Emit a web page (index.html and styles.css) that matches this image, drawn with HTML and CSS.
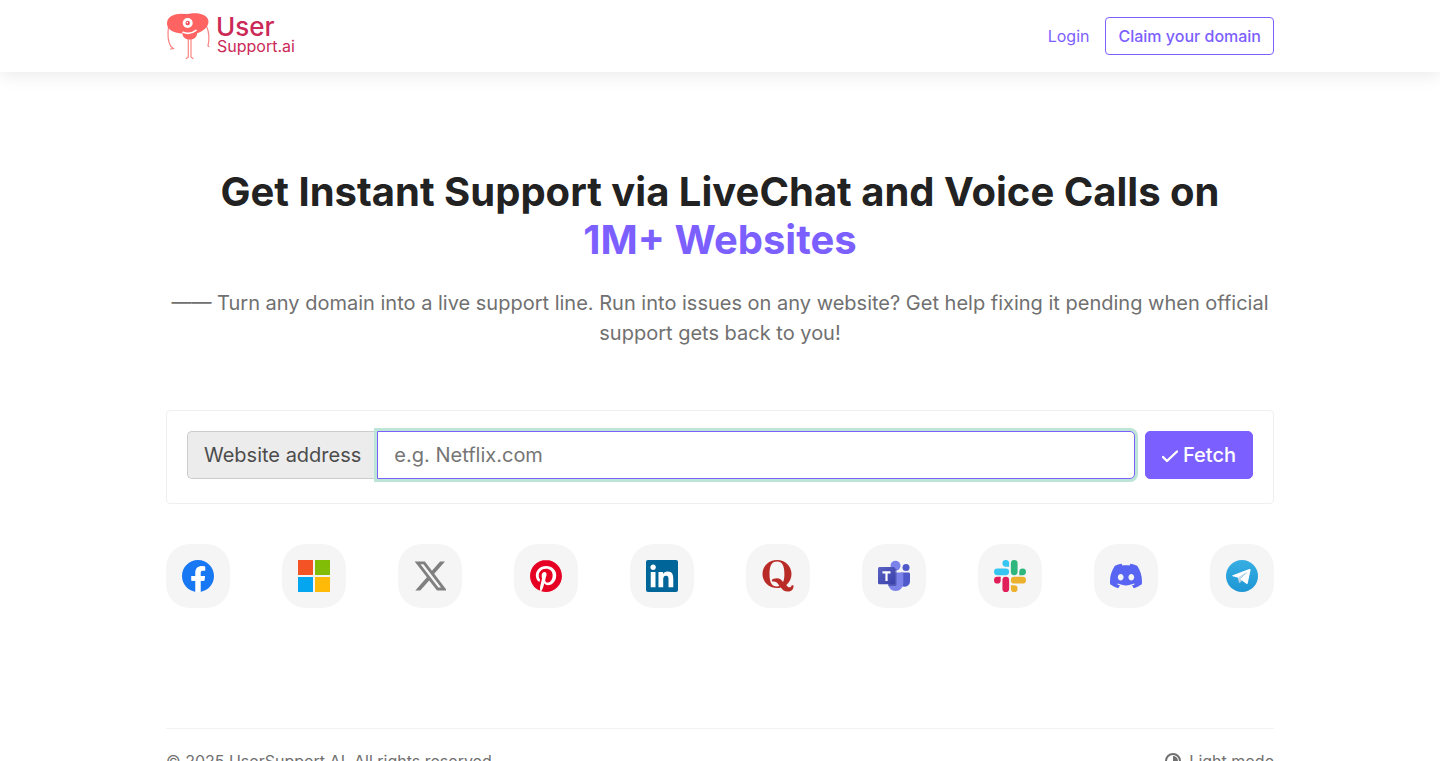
FILE: index.html
```html
<!DOCTYPE html>
<html lang="en">
<head>
<meta charset="utf-8">
<meta name="viewport" content="width=device-width, initial-scale=1">
<title>UserSupport.ai</title>
<link rel="stylesheet" href="styles.css">
</head>
<body>
<header class="site-header">
  <div class="container header-row">
    <a class="brand" href="#" aria-label="User Support.ai">
      <svg class="brand-logo" viewBox="0 0 136 50" aria-hidden="true">
        <g fill="none" stroke="#fa8584" stroke-width="1.200" stroke-linecap="round">
          <path d="M2.500 16C1.500 23 2 30 4.500 35l3 2.500-3 .5"/>
          <path d="M40.500 15c2.500 6 3 13 1.500 20l1 .5"/>
          <path d="M22.300 28v18l-2 1.500"/>
          <path d="M25 28v18l2 1.500"/>
        </g>
        <path fill="#ff6362" d="M21.500 3.500C26 1.500 41 1 42.500 10c0 7-6 10-11.500 12.500 0 8-14.500 8-14.500 0C9 22 1 19.500 1 12.500 1 3 14 1.500 21.500 3.500z"/>
        <path d="M17 4.500c3-1.500 5-1.500 8-.5" fill="none" stroke="#e8505a" stroke-width=".8"/>
        <circle cx="21.700" cy="12" r="5" fill="#fff"/>
        <circle cx="21.700" cy="12" r="2.200" fill="#f0475a"/>
        <circle cx="21.300" cy="11.600" r=".8" fill="#fff"/>
        <path d="M17 21.300c4 1.700 9 1.200 13-2" fill="none" stroke="#fff" stroke-width="1.600" stroke-linecap="round"/>
        <text class="brand-name" x="50" y="25">User</text>
        <text class="brand-sub" x="51" y="41">Support.ai</text>
      </svg>
    </a>
    <nav class="header-nav">
      <a class="login-link" href="#">Login</a>
      <button class="button-outline" type="button">Claim your domain</button>
    </nav>
  </div>
</header>

<main class="container hero">
  <h1 class="hero-title">Get Instant Support via LiveChat and Voice Calls on <span class="accent">1M+ Websites</span></h1>
  <p class="hero-text">—— Turn any domain into a live support line. Run into issues on any website? Get help fixing it pending when official support gets back to you!</p>

  <form class="search-card">
    <div class="input-group">
      <label class="input-label" for="address">Website address</label>
      <input class="input-field" id="address" type="text" placeholder="e.g. Netflix.com">
    </div>
    <button class="button-solid" type="button">
      <svg class="check-icon" viewBox="0 0 16 20" aria-hidden="true"><path d="M1 12l4 4 10-9.500" fill="none" stroke="#fff" stroke-width="2.400" stroke-linecap="round" stroke-linejoin="round"/></svg>
      <span>Fetch</span>
    </button>
  </form>

  <div class="tiles">
    <a class="tile" href="#" aria-label="Facebook"><svg class="tile-icon" viewBox="0 0 24 24"><path fill="#1877f2" d="M24 12.073c0-6.627-5.373-12-12-12s-12 5.373-12 12c0 5.990 4.388 10.954 10.125 11.854v-8.385H7.078v-3.470h3.047V9.430c0-3.007 1.792-4.669 4.533-4.669 1.312 0 2.686.235 2.686.235v2.953H15.830c-1.491 0-1.956.925-1.956 1.874v2.250h3.328l-.532 3.470h-2.796v8.385C19.612 23.027 24 18.062 24 12.073z"/><path fill="#fff" d="M10.125 23.927v-8.385H7.078v-3.470h3.047V9.430c0-3.007 1.792-4.669 4.533-4.669 1.312 0 2.686.235 2.686.235v2.953H15.830c-1.491 0-1.956.925-1.956 1.874v2.250h3.328l-.532 3.470h-2.796v8.385z"/></svg></a>
    <a class="tile" href="#" aria-label="Microsoft"><svg class="tile-icon" viewBox="0 0 32 32"><path fill="#f3f3f3" d="M0 0h32v32H0z"/><path fill="#f35325" d="M0 0h15v15H0z"/><path fill="#81bc06" d="M17 0h15v15H17z"/><path fill="#05a6f0" d="M0 17h15v15H0z"/><path fill="#ffba08" d="M17 17h15v15H17z"/></svg></a>
    <a class="tile" href="#" aria-label="X"><svg class="tile-icon" viewBox="0.8 1.3 21.4 21.4"><path fill="#808080" d="M18.244 2.250h3.308l-7.227 8.260 8.502 11.240H16.170l-5.214-6.817L4.990 21.750H1.680l7.730-8.835L1.254 2.250H8.080l4.713 6.231zm-1.161 17.520h1.833L7.084 4.126H5.117z"/></svg></a>
    <a class="tile" href="#" aria-label="Pinterest"><svg class="tile-icon" viewBox="0 0 24 24"><circle cx="12" cy="12" r="11.500" fill="#fff"/><path fill="#e60023" d="M12.017 0C5.396 0 .029 5.367.029 11.987c0 5.079 3.158 9.417 7.618 11.162-.105-.949-.199-2.403.041-3.439.219-.937 1.406-5.957 1.406-5.957s-.359-.720-.359-1.781c0-1.663.967-2.911 2.168-2.911 1.024 0 1.518.769 1.518 1.688 0 1.029-.653 2.567-.992 3.992-.285 1.193.600 2.165 1.775 2.165 2.128 0 3.768-2.245 3.768-5.487 0-2.861-2.063-4.869-5.008-4.869-3.410 0-5.409 2.562-5.409 5.199 0 1.033.394 2.143.889 2.741.099.120.112.225.085.345-.090.375-.293 1.199-.334 1.363-.053.225-.172.271-.401.165-1.495-.690-2.433-2.878-2.433-4.646 0-3.776 2.748-7.252 7.920-7.252 4.158 0 7.392 2.967 7.392 6.923 0 4.135-2.607 7.462-6.233 7.462-1.214 0-2.354-.629-2.758-1.379l-.749 2.848c-.269 1.045-1.004 2.352-1.498 3.146 1.123.345 2.306.535 3.550.535 6.607 0 11.985-5.365 11.985-11.987C23.970 5.390 18.592.026 11.985.026z"/></svg></a>
    <a class="tile" href="#" aria-label="LinkedIn"><svg class="tile-icon" viewBox="0 0 24 24"><rect width="24" height="24" rx="1.500" fill="#006699"/><path fill="#fff" d="M20.447 20.452h-3.554v-5.569c0-1.328-.027-3.037-1.852-3.037-1.853 0-2.136 1.445-2.136 2.939v5.667H9.351V9h3.414v1.561h.046c.477-.900 1.637-1.850 3.370-1.850 3.601 0 4.267 2.370 4.267 5.455v6.286zM5.337 7.433c-1.144 0-2.063-.926-2.063-2.065 0-1.138.920-2.063 2.063-2.063 1.140 0 2.064.925 2.064 2.063 0 1.139-.925 2.065-2.064 2.065zm1.782 13.019H3.555V9h3.564v11.452z"/></svg></a>
    <a class="tile" href="#" aria-label="Quora"><svg class="tile-icon" viewBox="0 0 32 32"><path fill="#b92b27" fill-rule="evenodd" d="M15 0C23 0 29.500 6 29.500 14c0 4.500-2 8.300-5.200 10.900 1 1.500 2 2.400 3.200 2.400 1.400 0 2-1 2.100-2.100h1.900c.3 3.300-1.500 6.300-5.500 6.300-3.700 0-5.700-1.800-7.200-4.100-1.200.4-2.500.6-3.800.6C7 28 .500 22 .500 14S7 0 15 0zm0 1.500c-5.500 0-7.500 4.500-7.500 12.500s2 12.500 7.500 12.500c.9 0 1.700-.1 2.400-.4-1.200-2.300-2.600-4.600-5.300-4.600-.5 0-1 .1-1.500.3l-.9-1.800c1.100-1 2.700-1.700 4.900-1.700 3.300 0 5 1.600 6.400 3.700 1-1.900 1.400-4.500 1.400-8 0-8-2-12.500-7.400-12.500z"/></svg></a>
    <a class="tile" href="#" aria-label="Microsoft Teams"><svg class="tile-icon" viewBox="0 0 32 32">
      <defs><linearGradient id="teams" x1="0" y1="0" x2="1" y2="1"><stop stop-color="#5a62c3"/><stop offset="1" stop-color="#3940ab"/></linearGradient></defs>
      <circle cx="28" cy="7.500" r="3.500" fill="#5059c9"/><path fill="#5059c9" d="M23 12.500h7.500c.8 0 1.500.7 1.500 1.500v7c0 3.300-2.300 5.700-5.200 5.700-1.500 0-2.800-.4-3.800-1.200z"/>
      <circle cx="17.500" cy="5.800" r="5" fill="#7b83eb"/><path fill="#7b83eb" d="M10 12.500h14c.7 0 1.300.6 1.300 1.300V23c0 4.500-3.500 8-7.700 8S10 27.500 10 23z"/>
      <path fill="#41489f" opacity=".7" d="M13 8.500h4c.8 0 1.500.7 1.500 1.500v14.500c0 .8-.7 1.500-1.500 1.500h-6.600z"/>
      <rect y="7" width="17" height="17.300" rx="1.500" fill="url(#teams)"/><path fill="#fff" d="M4.500 11.300h8v2.100H9.600V21H7.400v-7.600H4.500z"/></svg></a>
    <a class="tile" href="#" aria-label="Slack"><svg class="tile-icon" viewBox="0 0 24 24"><path fill="#e01e5a" d="M5.042 15.165a2.528 2.528 0 0 1-2.520 2.523A2.528 2.528 0 0 1 0 15.165a2.527 2.527 0 0 1 2.522-2.520h2.520v2.520zM6.313 15.165a2.527 2.527 0 0 1 2.521-2.520 2.527 2.527 0 0 1 2.521 2.520v6.313A2.528 2.528 0 0 1 8.834 24a2.528 2.528 0 0 1-2.521-2.522v-6.313z"/><path fill="#36c5f0" d="M8.834 5.042a2.528 2.528 0 0 1-2.521-2.520A2.528 2.528 0 0 1 8.834 0a2.528 2.528 0 0 1 2.521 2.522v2.520H8.834zM8.834 6.313a2.528 2.528 0 0 1 2.521 2.521 2.528 2.528 0 0 1-2.521 2.521H2.522A2.528 2.528 0 0 1 0 8.834a2.528 2.528 0 0 1 2.522-2.521h6.312z"/><path fill="#2eb67d" d="M18.956 8.834a2.528 2.528 0 0 1 2.522-2.521A2.528 2.528 0 0 1 24 8.834a2.528 2.528 0 0 1-2.522 2.521h-2.522V8.834zM17.688 8.834a2.528 2.528 0 0 1-2.523 2.521 2.527 2.527 0 0 1-2.520-2.521V2.522A2.527 2.527 0 0 1 15.165 0a2.528 2.528 0 0 1 2.523 2.522v6.312z"/><path fill="#ecb22e" d="M15.165 18.956a2.528 2.528 0 0 1 2.523 2.522A2.528 2.528 0 0 1 15.165 24a2.527 2.527 0 0 1-2.520-2.522v-2.522h2.520zM15.165 17.688a2.527 2.527 0 0 1-2.520-2.523 2.526 2.526 0 0 1 2.520-2.520h6.313A2.527 2.527 0 0 1 24 15.165a2.528 2.528 0 0 1-2.522 2.523h-6.313z"/></svg></a>
    <a class="tile" href="#" aria-label="Discord"><svg class="tile-icon" viewBox="0 0 24 24"><path fill="#5865f2" d="M20.317 4.370a19.791 19.791 0 00-4.885-1.515.074.074 0 00-.079.037c-.211.375-.445.865-.608 1.250-1.845-.276-3.680-.276-5.487 0-.164-.393-.406-.874-.618-1.250a.077.077 0 00-.079-.037 19.736 19.736 0 00-4.885 1.515.070.070 0 00-.032.028C.533 9.046-.319 13.580.099 18.058a.082.082 0 00.031.056c2.053 1.508 4.041 2.423 5.993 3.029a.078.078 0 00.084-.028c.462-.630.873-1.295 1.226-1.994a.076.076 0 00-.042-.106c-.653-.248-1.274-.550-1.872-.892a.077.077 0 01-.008-.128c.126-.094.252-.192.372-.291a.074.074 0 01.078-.011c3.928 1.793 8.180 1.793 12.061 0a.074.074 0 01.079.010c.120.099.246.198.373.292a.077.077 0 01-.007.128 12.299 12.299 0 01-1.873.891.077.077 0 00-.041.107c.360.698.772 1.363 1.225 1.993a.076.076 0 00.084.029c1.961-.607 3.950-1.522 6.002-3.029a.077.077 0 00.031-.055c.500-5.177-.838-9.674-3.549-13.660a.061.061 0 00-.031-.029zM8.020 15.331c-1.183 0-2.157-1.086-2.157-2.419 0-1.333.956-2.419 2.157-2.419 1.211 0 2.176 1.095 2.157 2.419 0 1.333-.956 2.419-2.157 2.419zm7.975 0c-1.183 0-2.157-1.086-2.157-2.419 0-1.333.955-2.419 2.157-2.419 1.211 0 2.176 1.095 2.157 2.419 0 1.333-.946 2.419-2.157 2.419z"/></svg></a>
    <a class="tile" href="#" aria-label="Telegram"><svg class="tile-icon" viewBox="0 0 32 32">
      <defs><linearGradient id="telegram" x1="0" y1="0" x2="0" y2="1"><stop stop-color="#37aee2"/><stop offset="1" stop-color="#1e96d4"/></linearGradient></defs>
      <circle cx="16" cy="16" r="16" fill="url(#telegram)"/><path fill="#c8daea" d="M11.500 16.500l1.700 6.500c.4 0 .6-.2.900-.5l3-2.800z"/><path fill="#a9c9dd" d="M13.200 23l.8-4.800 2.800 2z"/><path fill="#fff" d="M6.700 15.300L23.300 9c.8-.3 1.400.2 1.200 1.200l-2.700 12.900c-.2.900-.8 1.100-1.500.7L14 19.100l7.500-7.200-9.300 5.900-5.500-1.600c-.6-.2-.6-.6 0-.9z"/><path fill="#c8daea" d="M14 18.900l7.800-7.300-9.600 6z"/></svg></a>
  </div>
</main>

<footer class="container">
  <div class="footer-row">
    <span>© 2025 UserSupport AI. All rights reserved.</span>
    <button class="mode-button" type="button">
      <svg class="mode-icon" viewBox="0 0 16 16" aria-hidden="true"><circle cx="8" cy="8" r="7" fill="none" stroke="currentColor" stroke-width="2"/><path fill="currentColor" d="M8 3a5 5 0 0 1 0 10z"/></svg>
      <span>Light mode</span>
    </button>
  </div>
</footer>
</body>
</html>
```
FILE: styles.css
```css
* { box-sizing: border-box; }

body {
  margin: 0;
  background: #fff;
  color: #707070;
  font-family: Inter, "Liberation Sans", sans-serif;
  font-size: 16px;
  line-height: 24px;
}

button, input { font: inherit; }
a { color: #7c60ff; text-decoration: none; }

.container {
  width: 100%;
  max-width: 1140px;
  margin: 0 auto;
  padding: 0 16px;
}

.site-header {
  background: #fff;
  box-shadow: 0 4px 16px rgba(0, 0, 0, 0.08);
}

.header-row {
  display: flex;
  align-items: center;
  justify-content: space-between;
  min-height: 72px;
}

.brand { display: flex; }
.brand-logo { width: 136px; height: 50px; overflow: visible; }
.brand-name, .brand-sub { fill: #cb2957; }
.brand-name { font-size: 26px; font-weight: 500; }
.brand-sub { font-size: 16px; }

.header-nav { display: flex; align-items: center; gap: 16px; }

.button-outline {
  padding: 6px 12px;
  border: 1px solid #7c60ff;
  border-radius: 4px;
  background: transparent;
  color: #7c60ff;
  font-weight: 500;
}

.hero { padding-top: 96px; padding-bottom: 120px; }

.hero-title {
  margin: 0 0 24px;
  color: #222;
  font-size: 40px;
  font-weight: 700;
  line-height: 48px;
  text-align: center;
}

.accent { color: #7c60ff; white-space: nowrap; }

.hero-text {
  margin: 0 0 62px;
  font-size: 20px;
  line-height: 30px;
  text-align: center;
}

.search-card {
  display: flex;
  gap: 10px;
  padding: 20px 20px 24px;
  border: 1px solid #efefef;
  border-radius: 4px;
  font-size: 20px;
  line-height: 30px;
}

.input-group { display: flex; flex: 1; min-width: 0; }

.input-label {
  padding: 8px 16px;
  border: 1px solid #ccc;
  border-right: 0;
  border-radius: 5px 0 0 5px;
  background: #ececec;
  color: #4c4c4c;
}

.input-field {
  flex: 1;
  min-width: 0;
  padding: 8px 16px;
  border: 1px solid #7c60ff;
  border-radius: 0 5px 5px 0;
  outline: 0;
  background: #fff;
  box-shadow: 0 0 0 3px #bde5d6;
  color: #222;
}

.input-field::placeholder { color: #757575; opacity: 1; }

.button-solid {
  display: flex;
  align-items: center;
  gap: 5px;
  padding: 8px 16px;
  border: 1px solid #7c60ff;
  border-radius: 5px;
  background: #7c60ff;
  color: #fff;
  font-weight: 500;
}

.check-icon { width: 16px; height: 20px; }

.tiles {
  display: flex;
  flex-wrap: wrap;
  justify-content: space-between;
  gap: 16px;
  margin-top: 40px;
}

.tile {
  display: flex;
  padding: 16px;
  border-radius: 24px;
  background: #f5f5f5;
}

.tile-icon { width: 32px; height: 32px; }

.footer-row {
  display: flex;
  align-items: center;
  justify-content: space-between;
  padding: 20px 0;
  border-top: 1px solid #f2f2f2;
}

.mode-button {
  display: flex;
  align-items: center;
  gap: 8px;
  padding: 0;
  border: 0;
  background: transparent;
  color: inherit;
}

.mode-icon { width: 16px; height: 16px; }
```
